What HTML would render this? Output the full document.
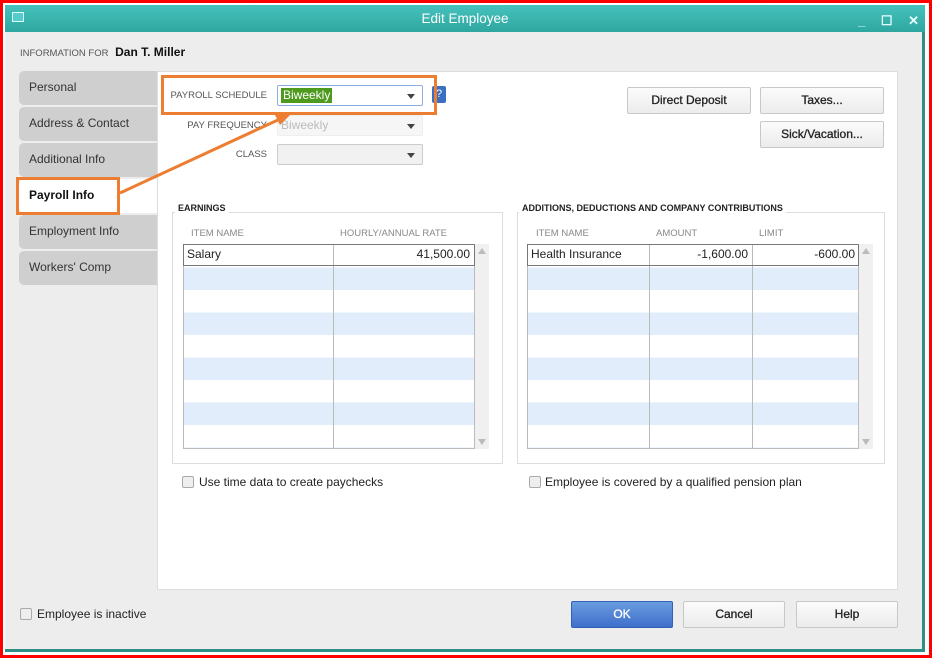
<!DOCTYPE html>
<html><head><meta charset="utf-8"><style>
*{box-sizing:border-box;margin:0;padding:0}
body{width:932px;height:658px;position:relative;background:#fff;font-family:"Liberation Sans",sans-serif;overflow:hidden}
.a{position:absolute}
.red{left:0;top:0;width:932px;height:658px;border:3px solid #f00}
.win{left:5px;top:5px;width:920px;height:647px;background:#ededed;border:3px solid #2f8f86;border-top:none;border-left:none}
.title{left:5px;top:5px;width:920px;height:27px;background:linear-gradient(#46c1bd,#2fa7a0);color:#fff;font-size:13.5px;text-align:center;line-height:27px}
.tab{left:19px;width:138px;height:34px;background:#cfcfcf;border-radius:5px 0 0 5px;font-size:12px;color:#333;padding-left:10px;line-height:33px}
.panel{left:157px;top:71px;width:741px;height:519px;background:#fff;border:1px solid #ddd}
.lbl{font-size:9.5px;color:#555;text-align:right;width:100px}
.dd{left:277px;width:146px;height:21px;border:1px solid #ccc;border-radius:2px;background:#f1f1f1}
.dd:after{content:"";position:absolute;right:7px;top:8px;border:4px solid transparent;border-top:5px solid #444;border-bottom:none}
.btn{height:27px;border:1px solid #c8c8c8;border-radius:2px;background:linear-gradient(#fbfbfb,#ececec);font-size:12px;color:#222;text-align:center;line-height:25px;-webkit-text-stroke:0.3px #222}
.grp{border:1px solid #ddd}
.gt{font-size:9px;font-weight:bold;color:#222;background:#fff;padding:0 3px}
.hd{font-size:9.5px;color:#888}
.rows{background:repeating-linear-gradient(#fff 0 22.5px,#e1edfb 22.5px 45px)}
.cb{width:12px;height:12px;border:1px solid #aaa;border-radius:2px;background:#eee}
.t{font-size:12px;color:#222}
.or{border:3px solid #ed7d31}
</style></head><body>
<div class="a red"></div>
<div class="a win"></div>
<div class="a title">Edit Employee</div>
<div class="a" style="left:12px;top:12px;width:12px;height:10px;border:1px solid #dff;background:#5cc"></div>
<div class="a" style="left:858px;top:13px;color:#e8ffff;font-size:13px;font-weight:bold;letter-spacing:6px">_ ☐ ✕</div>
<div class="a" style="left:20px;top:45px;font-size:9.5px;color:#555">INFORMATION FOR <b style="font-size:12px;color:#111;margin-left:4px">Dan T. Miller</b></div>
<div class="a panel"></div>
<div class="a tab" style="top:71px">Personal</div>
<div class="a tab" style="top:107px">Address &amp; Contact</div>
<div class="a tab" style="top:143px">Additional Info</div>
<div class="a tab" style="top:179px;background:#fff;font-weight:bold;color:#111">Payroll Info</div>
<div class="a tab" style="top:215px">Employment Info</div>
<div class="a tab" style="top:251px">Workers' Comp</div>

<div class="a lbl" style="left:167px;top:90px">PAYROLL SCHEDULE</div>
<div class="a lbl" style="left:167px;top:120px">PAY FREQUENCY</div>
<div class="a lbl" style="left:167px;top:149px">CLASS</div>
<div class="a dd" style="top:85px;background:#fff;border-color:#8aaee0"><span class="a" style="left:3px;top:2px;background:#4e9a1e;color:#fff;font-size:12px;padding:0 2px;line-height:15px">Biweekly</span></div>
<div class="a dd" style="top:115px;background:#f6f6f6;border-color:#eee"><span class="a" style="left:3px;top:2px;color:#bbb;font-size:12px">Biweekly</span></div>
<div class="a dd" style="top:144px"></div>
<div class="a" style="left:432px;top:86px;width:14px;height:17px;background:#3a6fc4;color:#fff;font-size:11px;text-align:center;line-height:17px;border-radius:2px">?</div>

<div class="a btn" style="left:627px;top:87px;width:124px">Direct Deposit</div>
<div class="a btn" style="left:760px;top:87px;width:124px">Taxes...</div>
<div class="a btn" style="left:760px;top:121px;width:124px">Sick/Vacation...</div>

<div class="a grp" style="left:172px;top:212px;width:331px;height:252px"></div>
<div class="a gt" style="left:175px;top:203px">EARNINGS</div>
<div class="a hd" style="left:191px;top:228px">ITEM NAME</div>
<div class="a hd" style="left:340px;top:228px">HOURLY/ANNUAL RATE</div>
<div class="a rows" style="left:183px;top:244px;width:292px;height:205px;border:1px solid #bbb"></div>
<div class="a" style="left:333px;top:244px;width:1px;height:205px;background:#bbb"></div>
<div class="a" style="left:183px;top:244px;width:292px;height:22px;border:1px solid #777;background:#fff"></div>
<div class="a" style="left:333px;top:245px;width:1px;height:20px;background:#bbb"></div>
<div class="a t" style="left:187px;top:247px">Salary</div>
<div class="a t" style="left:340px;top:247px;width:130px;text-align:right">41,500.00</div>
<div class="a" style="left:475px;top:244px;width:14px;height:205px;background:#f0f0f0"><div style="margin:4px 3px;border:4px solid transparent;border-bottom:6px solid #bbb;border-top:none;width:0"></div><div style="position:absolute;bottom:4px;left:3px;border:4px solid transparent;border-top:6px solid #bbb;border-bottom:none"></div></div>

<div class="a grp" style="left:517px;top:212px;width:368px;height:252px"></div>
<div class="a gt" style="left:519px;top:203px">ADDITIONS, DEDUCTIONS AND COMPANY CONTRIBUTIONS</div>
<div class="a hd" style="left:536px;top:228px">ITEM NAME</div>
<div class="a hd" style="left:656px;top:228px">AMOUNT</div>
<div class="a hd" style="left:759px;top:228px">LIMIT</div>
<div class="a rows" style="left:527px;top:244px;width:332px;height:205px;border:1px solid #bbb"></div>
<div class="a" style="left:649px;top:244px;width:1px;height:205px;background:#bbb"></div>
<div class="a" style="left:752px;top:244px;width:1px;height:205px;background:#bbb"></div>
<div class="a" style="left:527px;top:244px;width:332px;height:22px;border:1px solid #777;background:#fff"></div>
<div class="a" style="left:649px;top:245px;width:1px;height:20px;background:#bbb"></div>
<div class="a" style="left:752px;top:245px;width:1px;height:20px;background:#bbb"></div>
<div class="a t" style="left:531px;top:247px">Health Insurance</div>
<div class="a t" style="left:650px;top:247px;width:98px;text-align:right">-1,600.00</div>
<div class="a t" style="left:753px;top:247px;width:102px;text-align:right">-600.00</div>
<div class="a" style="left:859px;top:244px;width:14px;height:205px;background:#f0f0f0"><div style="margin:4px 3px;border:4px solid transparent;border-bottom:6px solid #bbb;border-top:none;width:0"></div><div style="position:absolute;bottom:4px;left:3px;border:4px solid transparent;border-top:6px solid #bbb;border-bottom:none"></div></div>

<div class="a cb" style="left:182px;top:476px"></div>
<div class="a t" style="left:199px;top:475px">Use time data to create paychecks</div>
<div class="a cb" style="left:529px;top:476px"></div>
<div class="a t" style="left:545px;top:475px">Employee is covered by a qualified pension plan</div>
<div class="a cb" style="left:20px;top:608px"></div>
<div class="a t" style="left:37px;top:607px">Employee is inactive</div>

<div class="a btn" style="left:571px;top:601px;width:102px;background:linear-gradient(#6a9ce0,#3f6fcb);border-color:#3560b5;color:#fff;-webkit-text-stroke:0.3px #fff">OK</div>
<div class="a btn" style="left:683px;top:601px;width:102px">Cancel</div>
<div class="a btn" style="left:796px;top:601px;width:102px">Help</div>

<div class="a or" style="left:161px;top:75px;width:276px;height:40px"></div>
<div class="a or" style="left:16px;top:177px;width:104px;height:38px"></div>
<svg class="a" style="left:0;top:0" width="932" height="658"><line x1="120" y1="193" x2="280" y2="119" stroke="#ed7d31" stroke-width="3"/><polygon points="292,113 274,113 280,125" fill="#ed7d31"/></svg>
</body></html>
